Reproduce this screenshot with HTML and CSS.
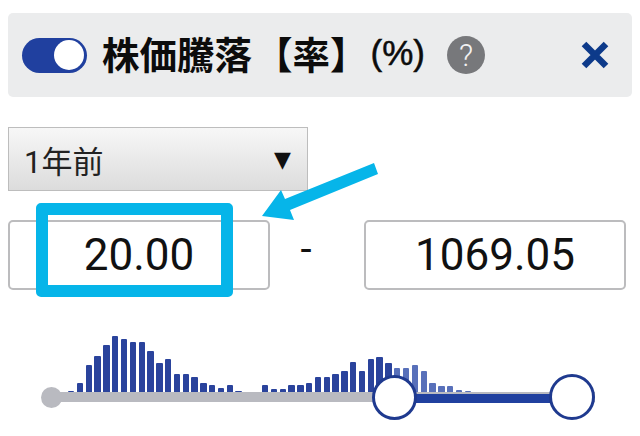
FILE: index.html
```html
<!DOCTYPE html>
<html>
<head>
    <meta charset='utf-8'>
    <title>株価騰落【率】</title>
    <link rel="stylesheet" href="styles.css">
</head>
<body>
    <div class="content">
        <div class="header">
            <div class="toggle"><span class="knob"></span></div>
            <div class="title">株価騰落<span class="bracket">【率】</span><span class="unit">(%)</span></div>
            <div class="help">?</div>
            <svg class="close" width="28" height="28" viewBox="0 0 28 28">
                <path d="M3 3L25 25M25 3L3 25" stroke="#0d3a8a" stroke-width="6.5" fill="none"/>
            </svg>
        </div>

        <div class="period">
            <span>1年前</span>
            <span class="caret">▼</span>
        </div>

        <div class="range">
            <div class="box">20.00</div>
            <div class="dash">-</div>
            <div class="box">1069.05</div>
            <div class="mark"></div>
            <svg class="arrow" width="130" height="70" viewBox="0 0 130 70">
                <path d="M114 3L118 14L30 50L34 60L2 56L21 30L25 39Z" fill="#06b5e9"/>
            </svg>
        </div>

        <div class="slider">
            <div class="bars">
                <i style="height:1px"></i><i style="height:9px"></i><i style="height:27px"></i><i style="height:36px"></i>
                <i style="height:47px"></i><i style="height:56px"></i><i style="height:53px"></i><i style="height:50px"></i>
                <i style="height:50px"></i><i style="height:41px"></i><i style="height:29px"></i><i style="height:33px"></i>
                <i style="height:18px"></i><i style="height:18px"></i><i style="height:15px"></i><i style="height:9px"></i>
                <i style="height:7px"></i><i style="height:4px"></i><i style="height:7px"></i><i style="height:1px"></i>
                <i style="height:0"></i><i style="height:0"></i>
                <i style="height:7px"></i><i style="height:3px"></i><i style="height:3px"></i><i style="height:7px"></i>
                <i style="height:7px"></i><i style="height:9px"></i><i style="height:15px"></i><i style="height:15px"></i>
                <i style="height:18px"></i><i style="height:21px"></i><i style="height:30px"></i><i style="height:21px"></i>
                <i style="height:33px"></i><i style="height:35px"></i><i style="height:29px"></i>
                <i class="off" style="height:24px"></i><i class="off" style="height:24px"></i><i class="off" style="height:27px"></i>
                <i class="off" style="height:21px"></i><i class="off" style="height:9px"></i><i class="off" style="height:6px"></i>
                <i class="off" style="height:6px"></i><i class="off" style="height:2px"></i><i class="off" style="height:1px"></i>
            </div>
            <div class="track">
                <div class="track-on"></div>
            </div>
            <span class="handle handle-min"></span>
            <span class="handle handle-mid"></span>
            <span class="handle handle-max"></span>
        </div>
    </div>
</body>
</html>
```

FILE: styles.css
```css
html,body,div{
    padding: 0;
    margin: 0;
}
body{
    background: #fff;
    font-family: Roboto, "Noto Sans CJK JP", sans-serif;
    color: #111;
}
.content{
    padding: 13px 8px 0;
}
.header{
    display: flex;
    align-items: center;
    height: 84px;
    padding: 0 23px 0 14px;
    box-sizing: border-box;
    background: #ebeced;
    border-radius: 5px;
}
.toggle{
    display: flex;
    align-items: center;
    justify-content: flex-end;
    width: 65px;
    height: 35px;
    padding-right: 3px;
    box-sizing: border-box;
    border-radius: 18px;
    background: #20409f;
}
.knob{
    width: 30px;
    height: 30px;
    border-radius: 50%;
    background: #fff;
}
.title{
    margin: 0 0 6px 15px;
    font-size: 37.5px;
    font-weight: 700;
    white-space: nowrap;
    color: #0c0c0c;
    font-family: "Noto Sans CJK JP", sans-serif;
}
.bracket{
    margin-left: 3px;
}
.unit{
    margin-left: 3px;
    vertical-align: 4px;
    font-size: 35px;
    font-family: "Liberation Sans", sans-serif;
    font-weight: 400;
    -webkit-text-stroke: 0.5px #0c0c0c;
}
.help{
    display: flex;
    align-items: center;
    justify-content: center;
    width: 38px;
    height: 38px;
    margin-left: 22px;
    border-radius: 50%;
    background: #77787b;
    color: #f2f2f2;
    font-size: 31px;
    font-weight: 300;
}
.close{
    margin-left: auto;
}
.period{
    display: flex;
    align-items: center;
    justify-content: space-between;
    width: 300px;
    height: 64px;
    margin-top: 30px;
    padding: 0 16px 0 15px;
    box-sizing: border-box;
    border: 1px solid #bdbdbd;
    background: linear-gradient(#f7f7f7, #dcdcdc);
    font-size: 31px;
    color: #222;
}
.caret{
    font-family: "DejaVu Sans", sans-serif;
    font-size: 22px;
    color: #111;
}
.range{
    position: relative;
    display: flex;
    align-items: center;
    margin-top: 29px;
    height: 70px;
}
.box{
    width: 262px;
    height: 70px;
    line-height: 66px;
    box-sizing: border-box;
    border: 2px solid #bcbcbe;
    border-radius: 5px;
    background: #fff;
    text-align: center;
    font-size: 44px;
    color: #111;
}
.dash{
    width: 94px;
    box-sizing: border-box;
    padding: 0 22px 12px 0;
    text-align: center;
    font-size: 40px;
}
.mark{
    position: absolute;
    left: 28px;
    top: -17px;
    width: 197px;
    height: 94px;
    box-sizing: border-box;
    border: 12px solid #06b5e9;
    border-radius: 5px;
}
.arrow{
    position: absolute;
    left: 252px;
    top: -60px;
}
.slider{
    position: relative;
    height: 90px;
    margin: 45px 0 0 33px;
    width: 554px;
}
.bars{
    display: flex;
    align-items: flex-end;
    gap: 2.43px;
    height: 57px;
    padding-left: 27px;
}
.bars i{
    display: block;
    flex: none;
    width: 6.4px;
    border-radius: 1px 1px 0 0;
    background: #2a439c;
}
.bars i.off{
    background: #5870ba;
}
.track{
    height: 10px;
    margin-left: 9px;
    background: #b9bac0;
}
.track-on{
    height: 9px;
    margin: 0 0 0 353px;
    position: relative;
    top: 2px;
    background: #20409f;
    width: 170px;
}
.handle{
    position: absolute;
    box-sizing: border-box;
    border-radius: 50%;
}
.handle-min{
    left: 0;
    top: 52px;
    width: 21px;
    height: 21px;
    background: #b9bac0;
}
.handle-mid{
    left: 331px;
    top: 40px;
    width: 45px;
    height: 45px;
    background: #fff;
    border: 3px solid #1f3a8f;
}
.handle-max{
    left: 508px;
    top: 39px;
    width: 46px;
    height: 46px;
    background: #fff;
    border: 3px solid #1f3a8f;
}
```
